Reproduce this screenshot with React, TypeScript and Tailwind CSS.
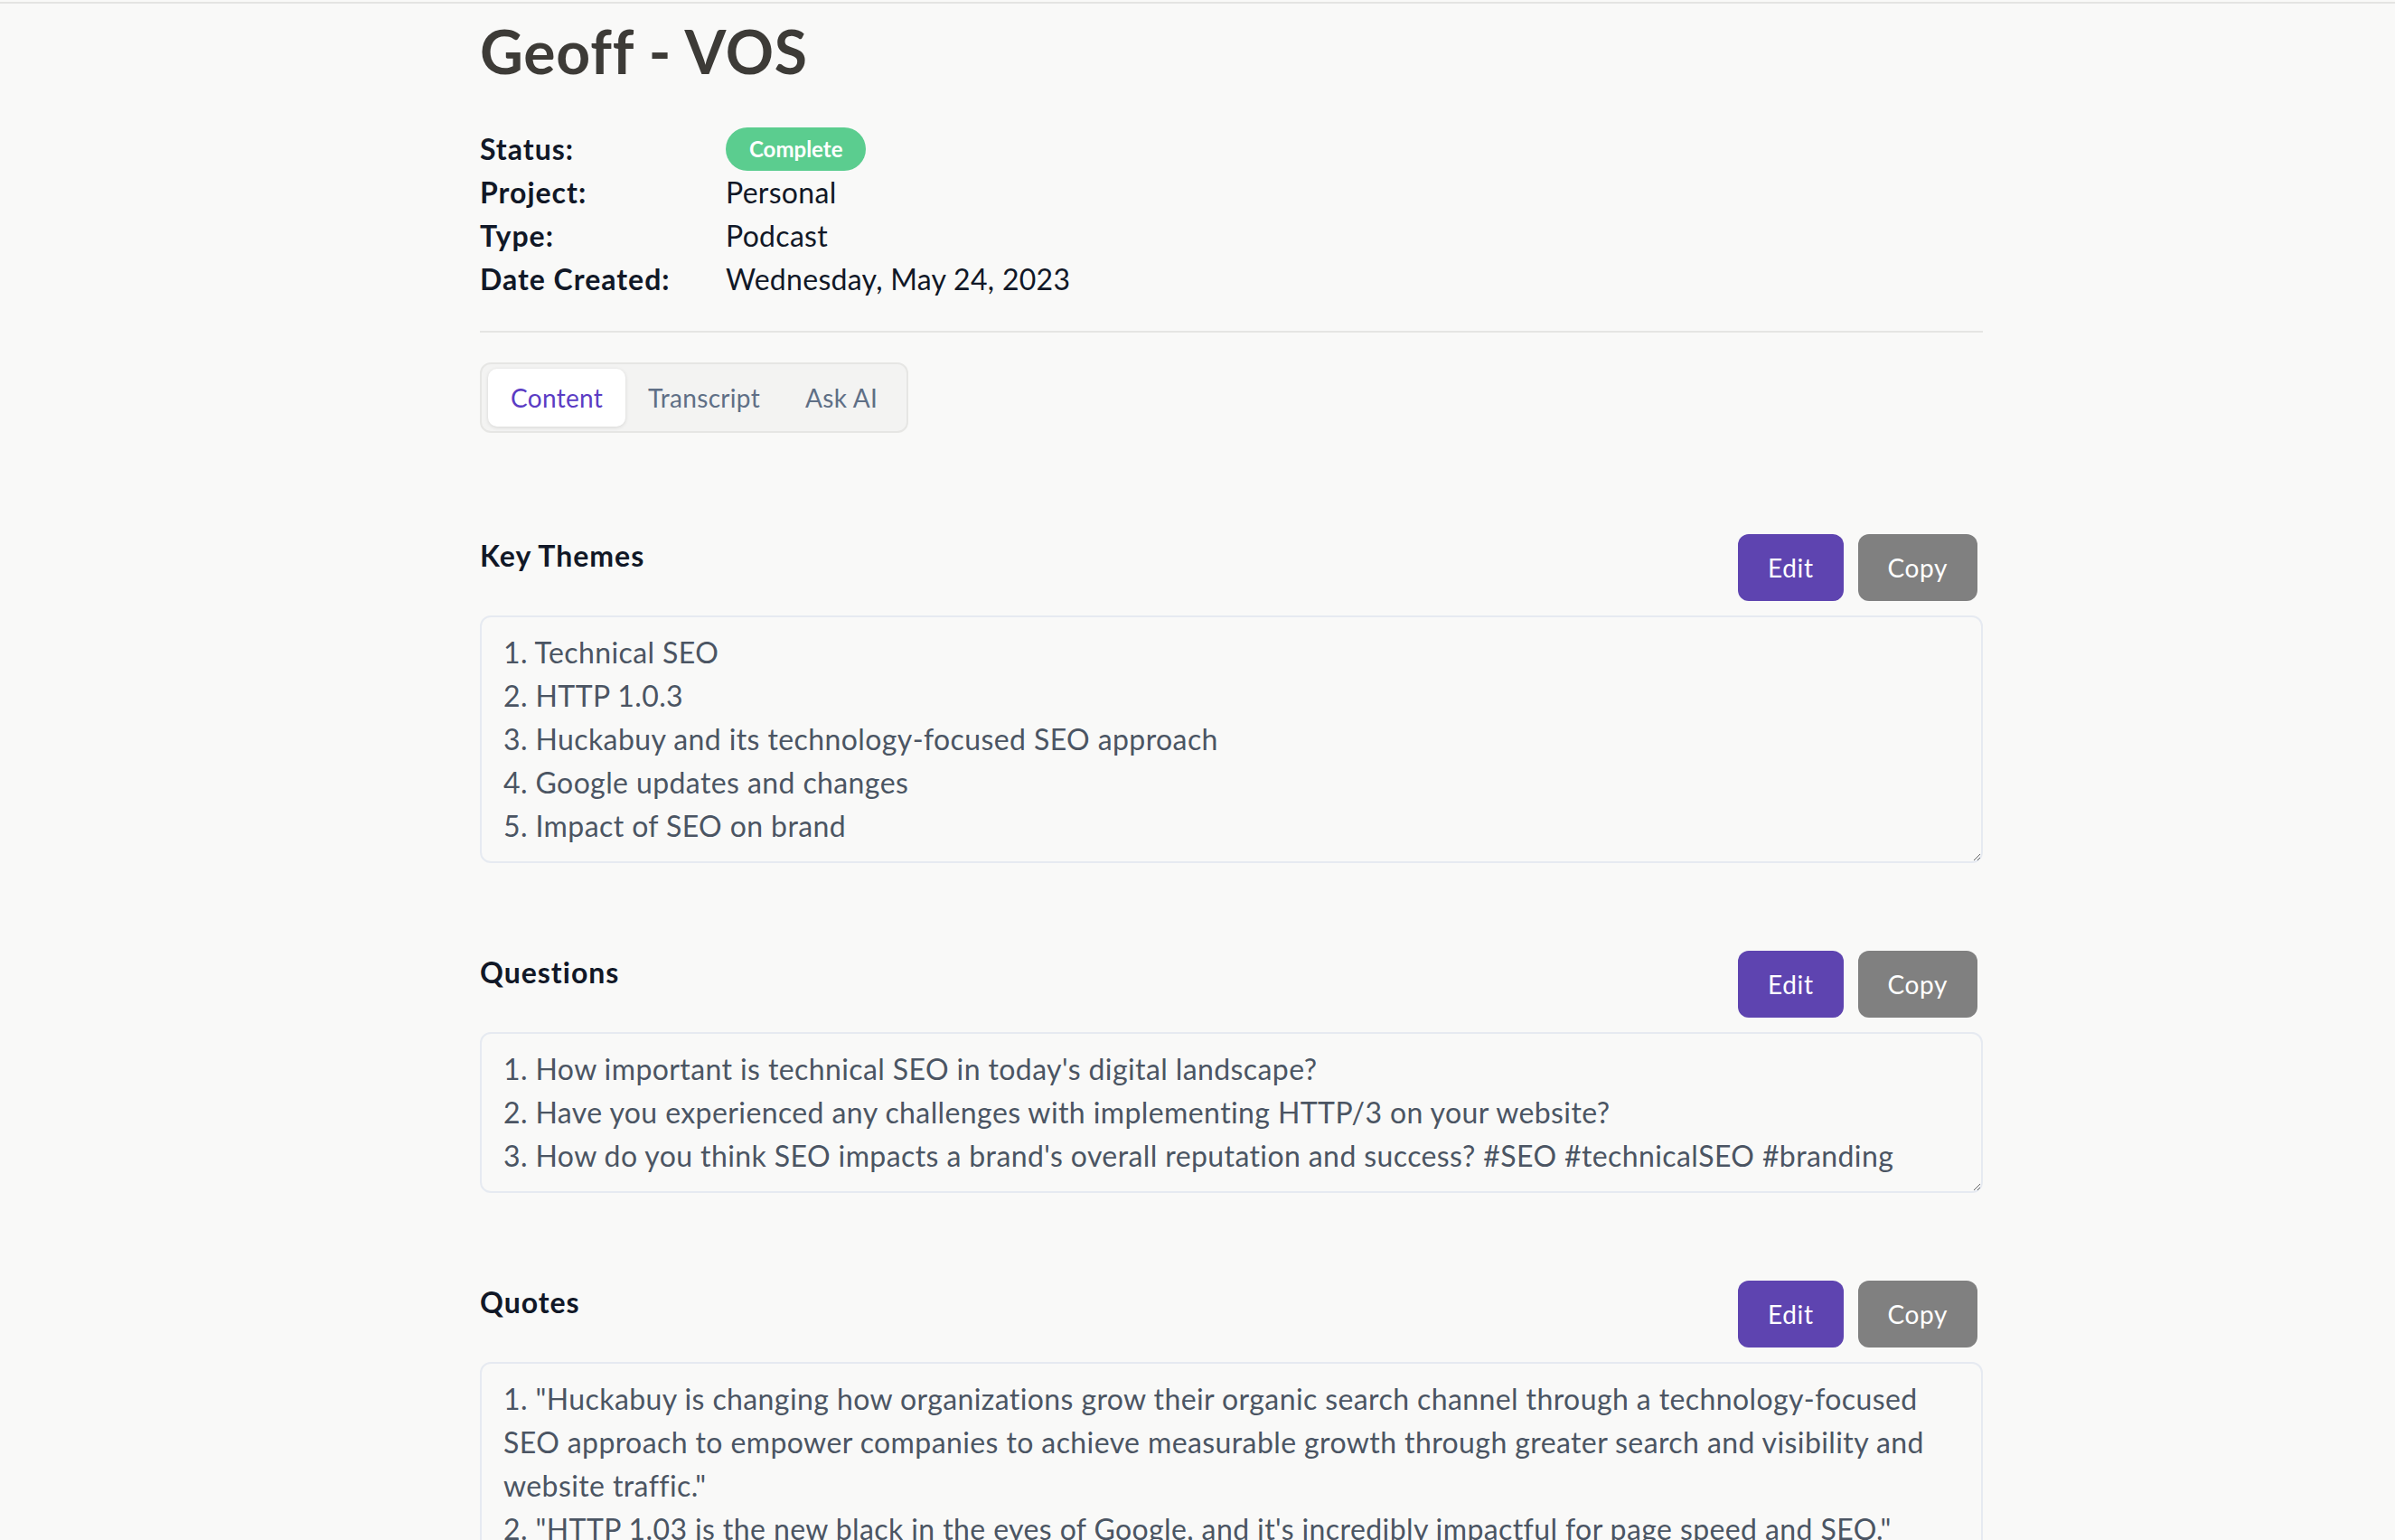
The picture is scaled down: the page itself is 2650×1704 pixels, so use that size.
import { useState } from 'react'

const sections = [
  {
    title: 'Key Themes',
    height: 'h-[274px]',
    text: [
      '1. Technical SEO',
      '2. HTTP 1.0.3',
      '3. Huckabuy and its technology-focused SEO approach',
      '4. Google updates and changes',
      '5. Impact of SEO on brand',
    ].join('\n'),
  },
  {
    title: 'Questions',
    height: 'h-[178px]',
    text: [
      "1. How important is technical SEO in today's digital landscape?",
      '2. Have you experienced any challenges with implementing HTTP/3 on your website?',
      "3. How do you think SEO impacts a brand's overall reputation and success? #SEO #technicalSEO #branding",
    ].join('\n'),
  },
  {
    title: 'Quotes',
    height: 'h-[330px]',
    text: [
      '1. "Huckabuy is changing how organizations grow their organic search channel through a technology-focused',
      'SEO approach to empower companies to achieve measurable growth through greater search and visibility and',
      'website traffic."',
      '2. "HTTP 1.03 is the new black in the eyes of Google, and it\'s incredibly impactful for page speed and SEO."',
    ].join('\n'),
  },
]

const meta = [
  { label: 'Project:', value: 'Personal' },
  { label: 'Type:', value: 'Podcast' },
  { label: 'Date Created:', value: 'Wednesday, May 24, 2023' },
]

const tabs = ['Content', 'Transcript', 'Ask AI']

function Section({ title, height, text }: { title: string; height: string; text: string }) {
  return (
    <section className="mt-[97px] first:mt-[112px]">
      <div className="flex items-start justify-between">
        <h2 className="text-[32px] leading-[48px] font-bold tracking-[1px] text-[#111827]">{title}</h2>
        <div className="mr-[6px] flex gap-4">
          <button className="h-[74px] rounded-[12px] bg-[#5e44b0] px-[33px] text-[28px] tracking-[0.6px] text-white">
            Edit
          </button>
          <button className="h-[74px] rounded-[12px] bg-[#808080] px-[33px] text-[28px] tracking-[0.6px] text-white">
            Copy
          </button>
        </div>
      </div>
      <textarea
        readOnly
        wrap="off"
        value={text}
        className={`mt-4 block w-full overflow-hidden rounded-[12px] border-2 border-[#e6eaf1] bg-[#f9f9f8] px-6 py-[15px] text-[32px] leading-[48px] tracking-[0.4px] text-[#4b5563] outline-none ${height}`}
      />
    </section>
  )
}

export default function App() {
  const [tab, setTab] = useState('Content')

  return (
    <div className="min-h-screen bg-[#f9f9f8] font-['Lato',sans-serif]">
      <div className="pt-[2px]">
        <div className="h-[2px] bg-[#e4e4e2]" />
      </div>
      <main className="ml-[531px] w-[1663px] pb-24">
        <h1 className="mt-[13px] text-[66px] leading-[1.2] font-bold tracking-[0.8px] text-[#3d3b37]">Geoff - VOS</h1>

        <div className="mt-[45px] grid grid-cols-[272px_1fr] text-[32px] leading-[48px] text-[#111827]">
          <div className="font-bold tracking-[1px]">Status:</div>
          <div className="flex h-[48px] items-center">
            <span className="flex h-[48px] items-center rounded-full bg-[#5bcd8f] px-[26px] text-[24px] font-bold text-white">
              Complete
            </span>
          </div>
          {meta.map((m) => (
            <div key={m.label} className="contents">
              <div className="font-bold tracking-[1px]">{m.label}</div>
              <div className="tracking-[0.3px]">{m.value}</div>
            </div>
          ))}
        </div>

        <div className="mt-[33px] h-[2px] bg-[#e5e5e3]" />

        <div className="mt-[33px] inline-flex rounded-[12px] border-2 border-[#e6e6e4] bg-[#f3f3f2] px-[7px] py-[5px]">
          {tabs.map((t) => (
            <button
              key={t}
              onClick={() => setTab(t)}
              className={
                t === tab
                  ? 'h-[64px] rounded-[10px] bg-white px-[25px] text-[28px] tracking-[0.3px] text-[#5b3cc4] shadow-[0_1px_4px_rgba(0,0,0,0.12)]'
                  : 'h-[64px] rounded-[10px] px-[25px] text-[28px] tracking-[0.3px] text-[#5f6f86]'
              }
            >
              {t}
            </button>
          ))}
        </div>

        <div>
          {sections.map((s) => (
            <Section key={s.title} {...s} />
          ))}
        </div>
      </main>
    </div>
  )
}
